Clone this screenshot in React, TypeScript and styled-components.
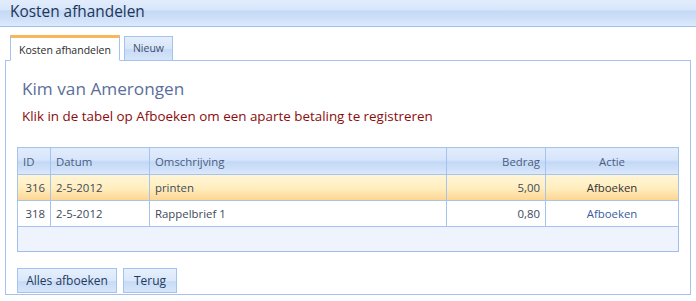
import React from 'react';
import styled, { createGlobalStyle } from 'styled-components';

const GlobalStyle = createGlobalStyle`
  body {
    margin: 0;
    background: #ffffff;
    font-family: "Open Sans", "Liberation Sans", sans-serif;
  }
`;

interface Cost {
  id: number;
  date: string;
  description: string;
  amount: string;
}

const costs: Cost[] = [
  { id: 316, date: '2-5-2012', description: 'printen', amount: '5,00' },
  { id: 318, date: '2-5-2012', description: 'Rappelbrief 1', amount: '0,80' },
];

export default function App(): React.ReactElement {
  return (
    <>
      <GlobalStyle />
      <Page>
        <TitleBar>Kosten afhandelen</TitleBar>
        <Body>
          <TabStrip>
            <Tab $active>Kosten afhandelen</Tab>
            <Tab>Nieuw</Tab>
          </TabStrip>
          <Panel>
            <Heading>Kim van Amerongen</Heading>
            <Notice>Klik in de tabel op Afboeken om een aparte betaling te registreren</Notice>
            <Grid>
              <colgroup>
                <col style={{ width: 33 }} />
                <col style={{ width: 99 }} />
                <col style={{ width: 297 }} />
                <col style={{ width: 99 }} />
                <col />
              </colgroup>
              <thead>
                <tr>
                  <HeadCell>ID</HeadCell>
                  <HeadCell>Datum</HeadCell>
                  <HeadCell>Omschrijving</HeadCell>
                  <HeadCell $align="right">Bedrag</HeadCell>
                  <HeadCell $align="center">Actie</HeadCell>
                </tr>
              </thead>
              <tbody>
                {costs.map((c, i) => (
                  <Row key={c.id} $selected={i === 0}>
                    <Cell $align="right">{c.id}</Cell>
                    <Cell>{c.date}</Cell>
                    <Cell>{c.description}</Cell>
                    <Cell $align="right">{c.amount}</Cell>
                    <Cell $align="center">
                      <Action $selected={i === 0}>Afboeken</Action>
                    </Cell>
                  </Row>
                ))}
                <FillerRow>
                  <td colSpan={5} />
                </FillerRow>
              </tbody>
            </Grid>
            <Buttons>
              <Button $width={100}>Alles afboeken</Button>
              <Button $width={54}>Terug</Button>
            </Buttons>
          </Panel>
        </Body>
      </Page>
    </>
  );
}

const Page = styled.div`
  width: 696px;
  height: 301px;
  overflow: hidden;
`;

const TitleBar = styled.div`
  box-sizing: border-box;
  height: 27px;
  padding: 2px 0 0 10px;
  font-size: 15.4px;
  line-height: 20px;
  color: #1f3556;
  background: linear-gradient(
    to bottom,
    #e2edfc 0%,
    #d7e6fb 38%,
    #c4d9f6 42%,
    #d2e3fa 80%,
    #dce9fc 100%
  );
  border-bottom: 1px solid #9fbfed;
`;

const Body = styled.div`
  padding: 8px 5px 0 5px;
`;

const TabStrip = styled.div`
  display: flex;
  align-items: flex-end;
  gap: 4px;
  padding-left: 5px;
  position: relative;
  z-index: 1;
  margin-bottom: -1px;
`;

const Tab = styled.div<{ $active?: boolean }>`
  box-sizing: border-box;
  height: ${({ $active }) => ($active ? '26px' : '25px')};
  padding: ${({ $active }) => ($active ? '3px 8px 0 8px' : '2px 8px 0 8px')};
  font-size: 10.5px;
  line-height: 18px;
  color: ${({ $active }) => ($active ? '#2a2a2a' : '#3d4d6b')};
  border: 1px solid #a6c3ee;
  border-bottom: ${({ $active }) => ($active ? '1px solid #ffffff' : '1px solid #a6c3ee')};
  border-top: ${({ $active }) => ($active ? '3px solid #f9b75a' : '1px solid #a6c3ee')};
  background: ${({ $active }) =>
    $active
      ? '#ffffff'
      : 'linear-gradient(to bottom, #e4eefc 0%, #d8e6fa 50%, #c6daf6 55%, #d6e5fa 100%)'};
`;

const Panel = styled.div`
  box-sizing: border-box;
  height: 235px;
  width: 686px;
  border: 1px solid #a6c3ee;
  padding: 16px 10px 0 11px;
`;

const Heading = styled.div`
  margin-left: 5px;
  font-size: 17.2px;
  line-height: 24px;
  color: #5b6e9a;
`;

const Notice = styled.div`
  margin: 6px 0 0 5px;
  font-size: 13.4px;
  line-height: 18px;
  color: #8a0c0c;
`;

const Grid = styled.table`
  margin-top: 22px;
  width: 662px;
  border-collapse: collapse;
  table-layout: fixed;
  border: 1px solid #9fbde8;
  font-size: 11.4px;
`;

const HeadCell = styled.th<{ $align?: string }>`
  height: 26px;
  padding: 0 5px;
  font-weight: normal;
  text-align: ${({ $align }) => $align || 'left'};
  color: #4b5c80;
  border: 1px solid #a6c3ee;
  background: linear-gradient(
    to bottom,
    #e2edfc 0%,
    #d6e5fb 45%,
    #c3d8f6 50%,
    #cfe1f9 80%,
    #dce9fc 100%
  );
`;

const Row = styled.tr<{ $selected?: boolean }>`
  background: ${({ $selected }) =>
    $selected ? 'linear-gradient(to bottom, #fff5d6 0%, #ffeebf 50%, #fdd48f 100%)' : '#ffffff'};
`;

const Cell = styled.td<{ $align?: string }>`
  height: 25px;
  padding: 0 5px;
  text-align: ${({ $align }) => $align || 'left'};
  color: #404a5c;
  border: 1px solid #a6c3ee;
`;

const Action = styled.span<{ $selected?: boolean }>`
  color: ${({ $selected }) => ($selected ? '#333333' : '#3a5c9c')};
  cursor: pointer;
`;

const FillerRow = styled.tr`
  height: 25px;
  background: #eef3fd;
`;

const Buttons = styled.div`
  display: flex;
  gap: 6px;
  margin-top: 16px;
`;

const Button = styled.button<{ $width: number }>`
  box-sizing: border-box;
  width: ${({ $width }) => $width}px;
  height: 25px;
  padding: 0;
  font-family: inherit;
  font-size: 12px;
  color: #233a5c;
  border: 1px solid #a6c3ee;
  background: linear-gradient(to bottom, #e6f0fd 0%, #dae8fb 50%, #c8dcf7 55%, #d6e6fa 100%);
  cursor: pointer;
`;
